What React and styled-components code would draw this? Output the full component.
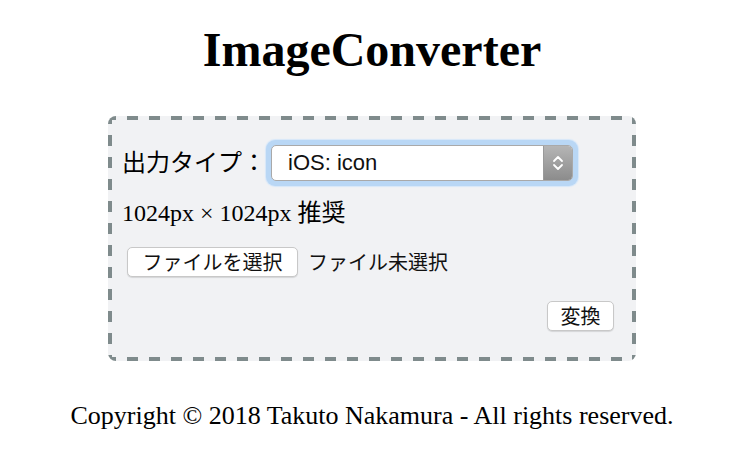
import React from 'react'
import styled, { createGlobalStyle } from 'styled-components'

const GlobalStyle = createGlobalStyle`
  html, body {
    margin: 0;
    padding: 0;
    background: #ffffff;
  }
  body {
    font-family: "Liberation Serif", "Noto Sans CJK JP", serif;
    color: #000;
  }
`;

function App() {
  return (
    <Page>
      <GlobalStyle />
      <Title>ImageConverter</Title>
      <Panel>
        <TypeRow>
          <Label>出力タイプ：</Label>
          <SelectRing>
            <SelectField>
              <SelectValue>iOS: icon</SelectValue>
              <ArrowBox>
                <svg width="12" height="20" viewBox="0 0 12 20" fill="none">
                  <path d="M2 8 L6 4 L10 8" stroke="#fff" strokeWidth="1.8" strokeLinecap="round" strokeLinejoin="round" />
                  <path d="M2 12 L6 16 L10 12" stroke="#fff" strokeWidth="1.8" strokeLinecap="round" strokeLinejoin="round" />
                </svg>
              </ArrowBox>
            </SelectField>
          </SelectRing>
        </TypeRow>
        <SizeNote>1024px × 1024px 推奨</SizeNote>
        <FileRow>
          <PlainButton $width="171px">ファイルを選択</PlainButton>
          <FileStatus>ファイル未選択</FileStatus>
        </FileRow>
        <ActionRow>
          <PlainButton $width="67px">変換</PlainButton>
        </ActionRow>
      </Panel>
      <Footer>Copyright © 2018 Takuto Nakamura - All rights reserved.</Footer>
    </Page>
  )
}

export default App

// dash pattern of the panel edge: 11px dash, 11px gap
const dashH = 'repeating-linear-gradient(90deg, #7f8b8c 0 8px, transparent 8px 19px, #7f8b8c 19px 22px)';
const dashV = 'repeating-linear-gradient(180deg, #7f8b8c 0 8px, transparent 8px 19px, #7f8b8c 19px 22px)';

const Page = styled.div`
  display: flex;
  flex-direction: column;
  align-items: center;
  padding-left: 14px;
  width: 730px;
  box-sizing: border-box;
`;

const Title = styled.h1`
  font-family: "Liberation Serif", serif;
  font-size: 48px;
  font-weight: bold;
  line-height: 56px;
  margin: 22px 0 0;
`;

const Panel = styled.div`
  width: 528px;
  height: 245px;
  box-sizing: border-box;
  margin-top: 38px;
  padding: 23px 22px 0 14px;
  border-radius: 8px;
  background:
    ${dashH} top left / 100% 4px no-repeat,
    ${dashH} bottom left / 100% 4px no-repeat,
    ${dashV} top left / 4px 100% no-repeat,
    ${dashV} top right / 4px 100% no-repeat,
    #f1f2f4;
  display: flex;
  flex-direction: column;
`;

const TypeRow = styled.div`
  display: flex;
  align-items: center;
  height: 48px;
`;

const Label = styled.span`
  font-size: 24px;
  line-height: 28px;
  width: 144px;
`;

const SelectRing = styled.div`
  padding: 5px;
  border-radius: 9px;
  background: #b9d7f5;
  box-shadow: 0 0 1px 1px #d6e7f9;
`;

const SelectField = styled.div`
  display: flex;
  width: 302px;
  height: 36px;
  box-sizing: border-box;
  border: 1px solid #a9a9a9;
  border-radius: 5px;
  background: #fff;
  overflow: hidden;
`;

const SelectValue = styled.div`
  flex: 1;
  padding-left: 16px;
  font-family: "Liberation Sans", Arial, sans-serif;
  font-size: 22px;
  line-height: 34px;
  color: #111;
`;

const ArrowBox = styled.div`
  width: 28px;
  display: flex;
  align-items: center;
  justify-content: center;
  background: linear-gradient(#b5b5b5, #8c8c8c);
  border-left: 1px solid #9a9a9a;
`;

const SizeNote = styled.div`
  font-size: 24px;
  line-height: 28px;
  margin-top: 12px;
`;

const FileRow = styled.div`
  display: flex;
  align-items: center;
  gap: 10px;
  margin-top: 20px;
  padding-left: 5px;
`;

const PlainButton = styled.button`
  width: ${p => p.$width};
  height: 30px;
  padding: 0;
  font-family: "Noto Sans CJK JP", "Liberation Sans", sans-serif;
  font-size: 20px;
  line-height: 28px;
  color: #111;
  background: #fff;
  border: 1px solid #c8c8c8;
  border-radius: 5px;
  box-shadow: 0 1px 1px rgba(0, 0, 0, 0.12);
`;

const FileStatus = styled.span`
  font-family: "Noto Sans CJK JP", "Liberation Sans", sans-serif;
  font-size: 20px;
  line-height: 28px;
  color: #111;
`;

const ActionRow = styled.div`
  display: flex;
  justify-content: flex-end;
  margin-top: 24px;
`;

const Footer = styled.p`
  font-size: 26px;
  line-height: 30px;
  margin: 40px 0 0;
`;
